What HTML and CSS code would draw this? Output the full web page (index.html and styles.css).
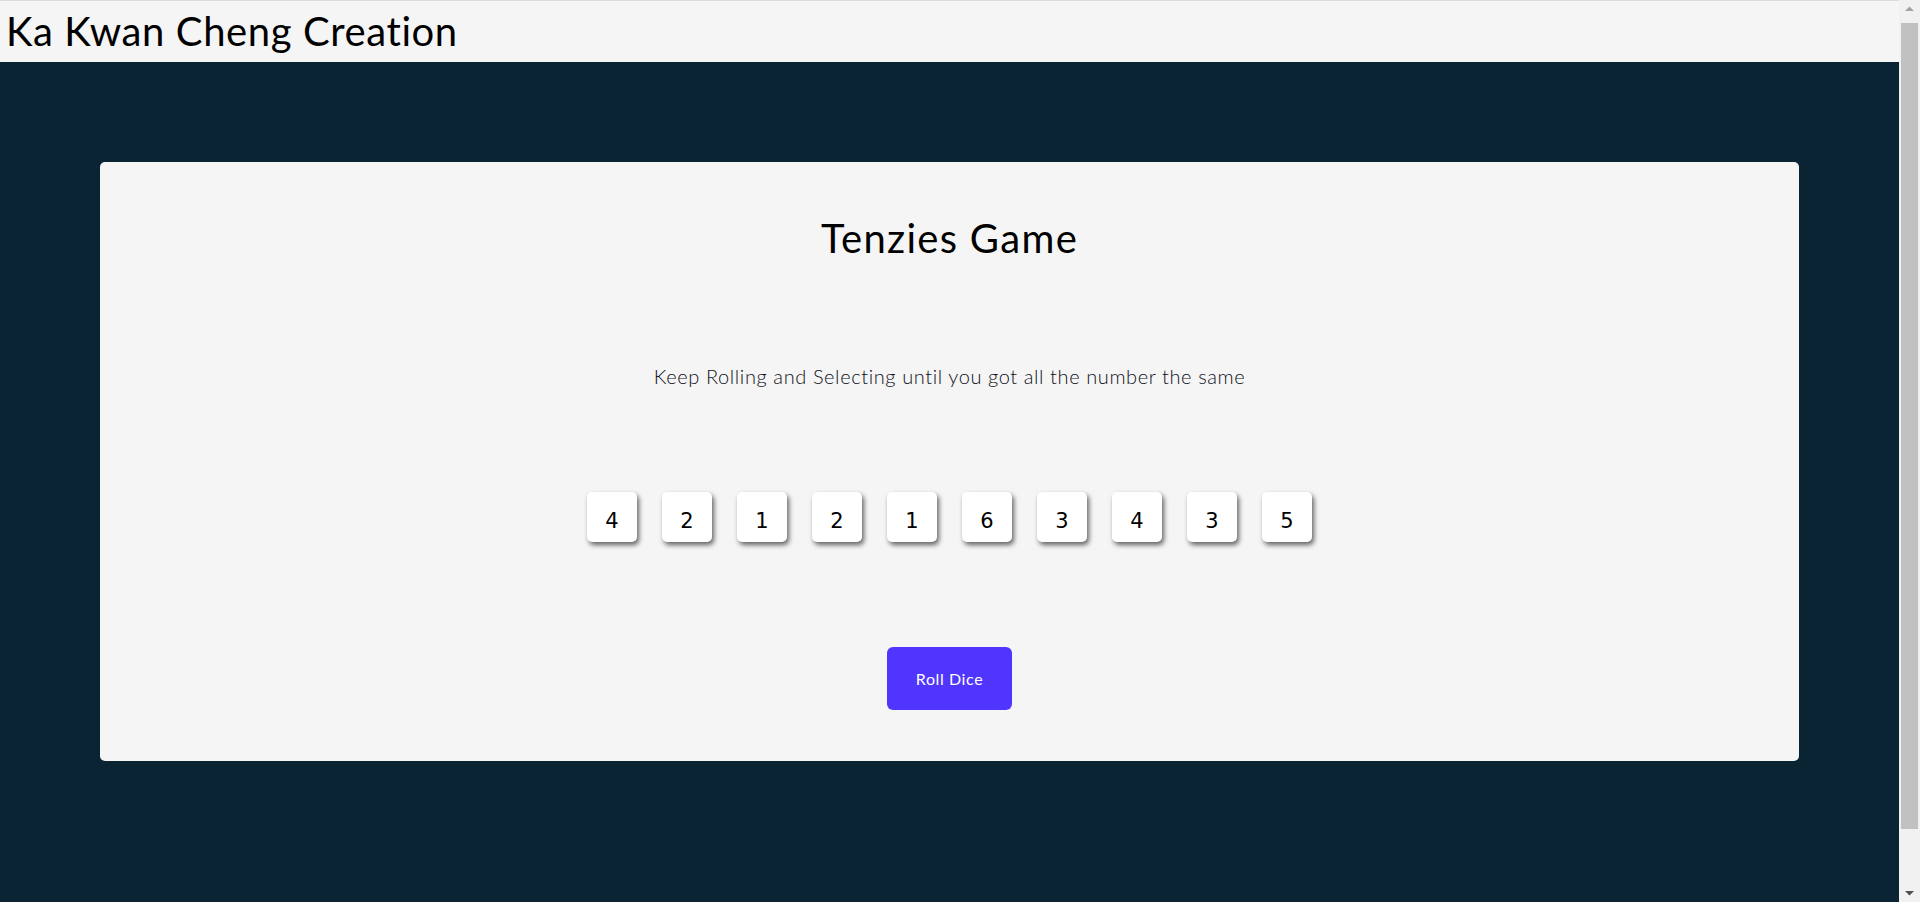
FILE: index.html
```html
<!DOCTYPE html>
<html lang="en">
<head>
<meta charset="utf-8">
<title>Tenzies Game</title>
<link rel="stylesheet" href="styles.css">
</head>
<body>
  <div class="page">
    <header class="site-header">
      <span class="site-title">Ka Kwan Cheng Creation</span>
    </header>
    <main class="stage">
      <section class="card">
        <h1 class="card-title">Tenzies Game</h1>
        <p class="instructions">Keep Rolling and Selecting until you got all the number the same</p>
        <div class="dice-row">
          <button class="die">4</button>
          <button class="die">2</button>
          <button class="die">1</button>
          <button class="die">2</button>
          <button class="die">1</button>
          <button class="die">6</button>
          <button class="die">3</button>
          <button class="die">4</button>
          <button class="die">3</button>
          <button class="die">5</button>
        </div>
        <button class="roll-btn">Roll Dice</button>
      </section>
    </main>
  </div>
  <div class="scrollbar" aria-hidden="true">
    <svg class="arrow" width="21" height="17" viewBox="0 0 21 17"><path d="M6 11 L10.5 6.5 L15 11 Z" fill="#a3a3a3"/></svg>
    <div class="track"><div class="thumb"></div></div>
    <svg class="arrow" width="21" height="17" viewBox="0 0 21 17"><path d="M6 6 L10.5 10.5 L15 6 Z" fill="#505050"/></svg>
  </div>
</body>
</html>
```

FILE: styles.css
```css
* { box-sizing: border-box; }

html, body {
  margin: 0;
  padding: 0;
}

body {
  font-family: "Lato", "Liberation Sans", sans-serif;
  background: #0b2434;
  height: 902px;
  overflow: hidden;
  display: flex;
}

.page {
  width: 1899px;
  flex: none;
}

.site-header {
  height: 62px;
  background: #f5f5f5;
  border-top: 1px solid #dcdcdc;
  padding: 4px 0 0 6px;
}

.site-title {
  font-size: 40px;
  line-height: 52px;
  font-weight: 400;
  letter-spacing: 0.6px;
  color: #000;
}

.stage {
  padding: 100px;
}

.card {
  background: #f5f5f5;
  border-radius: 5px;
  height: 599px;
  display: flex;
  flex-direction: column;
  align-items: center;
}

.card-title {
  margin: 52px 0 0;
  font-size: 40px;
  line-height: 48px;
  font-weight: 400;
  letter-spacing: 1.3px;
  color: #000;
}

.instructions {
  margin: 102px 0 0;
  font-size: 20px;
  line-height: 24px;
  font-weight: 300;
  letter-spacing: 0.6px;
  color: #0f1020;
}

.dice-row {
  margin-top: 104px;
  display: flex;
  gap: 25px;
}

.die {
  width: 50px;
  height: 50px;
  border: none;
  border-radius: 5px;
  background: #fff;
  box-shadow: 2px 3px 5px rgba(0, 0, 0, 0.6);
  font-family: "DejaVu Sans", sans-serif;
  font-size: 21px;
  color: #000;
  padding: 7px 0 0;
  display: flex;
  align-items: center;
  justify-content: center;
}

.roll-btn {
  margin-top: 105px;
  width: 125px;
  height: 63px;
  border: none;
  border-radius: 6px;
  background: #5035ff;
  color: #fff;
  font-family: "Lato", "Liberation Sans", sans-serif;
  font-size: 16px;
  font-weight: 400;
  letter-spacing: 0.6px;
}

.scrollbar {
  position: fixed;
  top: 0;
  right: 0;
  width: 21px;
  height: 902px;
  background: #f1f1f1;
  display: flex;
  flex-direction: column;
}

.arrow {
  display: block;
  flex: none;
}

.track {
  flex: 1;
  padding: 6px 2px;
}

.thumb {
  height: 806px;
  background: #c1c1c1;
}
```
